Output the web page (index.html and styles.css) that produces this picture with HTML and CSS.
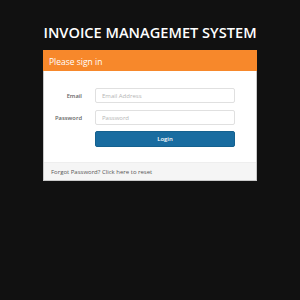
FILE: index.html
```html
<!DOCTYPE html>
<html lang="en">
<head>
    <meta charset="utf-8" />
    <title>Invoice Management System - Sign in</title>
    <link rel="stylesheet" href="styles.css">
</head>
<body>
    <main class="login">
        <h1 class="login-title">INVOICE MANAGEMET SYSTEM</h1>

        <section class="panel">
            <header class="panel-heading">Please sign in</header>

            <form class="panel-body">
                <label for="email">Email</label>
                <input id="email" type="text" placeholder="Email Address" />

                <label for="password">Password</label>
                <input id="password" type="password" placeholder="Password" />

                <button type="submit" class="btn-login">Login</button>
            </form>

            <footer class="panel-footer">
                Forgot Password? Click here to reset
            </footer>
        </section>
    </main>
</body>
</html>
```

FILE: styles.css
```css
* {
    font-family: "Open Sans", "Liberation Sans", sans-serif;
    box-sizing: border-box;
}

body {
    margin: 0;
    background: #111111;
}

.login {
    width: 214px;
    margin: 0 0 0 43px;
}

.login-title {
    margin: 22px 0 8px;
    font-size: 14.6px;
    line-height: 20px;
    font-weight: 600;
    color: #ffffff;
    text-align: center;
    white-space: nowrap;
}

.panel {
    background: #ffffff;
    border: 1px solid #c9c9c9;
    border-top: 0;
}

.panel-heading {
    height: 21px;
    padding: 0 6px;
    background: #f7882b;
    color: #ffffff;
    font-size: 8.5px;
    line-height: 23px;
    margin: 0 -1px;
}

.panel-body {
    display: grid;
    grid-template-columns: 38px 140px;
    column-gap: 13px;
    row-gap: 7px;
    align-items: center;
    padding: 17px 0 15px;
    margin: 0;
}

.panel-body label {
    text-align: right;
    font-size: 5.8px;
    font-weight: 600;
    color: #666666;
}

.panel-body input {
    height: 15px;
    padding: 0 6px;
    border: 1px solid #e0e0e0;
    border-radius: 2px;
    font-size: 6px;
    color: #555555;
    outline: none;
}

.panel-body input::placeholder {
    color: #b5b5b5;
}

.btn-login {
    grid-column: 2;
    height: 16px;
    margin-top: -1px;
    border: 1px solid #15618f;
    border-radius: 2px;
    background: #196ca0;
    color: #ffffff;
    font-size: 6px;
    font-weight: 600;
    padding: 0;
}

.panel-footer {
    height: 18px;
    padding: 0 7px;
    background: #f5f5f5;
    border-top: 1px solid #eeeeee;
    font-size: 6px;
    line-height: 18px;
    color: #555555;
}
```
